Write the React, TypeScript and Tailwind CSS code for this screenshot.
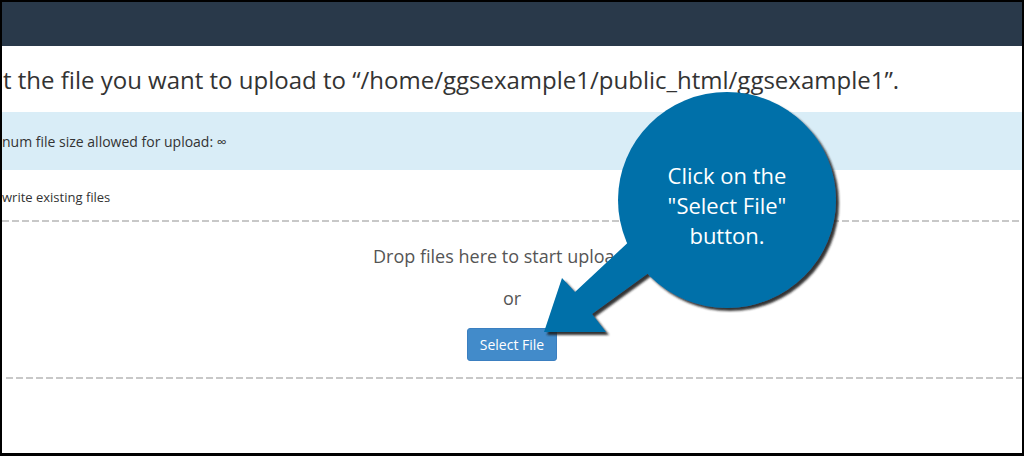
import React from "react";

export default function App() {
  const dash =
    "h-[2px] bg-[repeating-linear-gradient(to_right,#c8c8c8_0px,#c8c8c8_7px,transparent_7px,transparent_10px)]";
  return (
    <div
      className="relative w-[1024px] h-[456px] overflow-hidden bg-black pt-[2px] pl-[2px] pr-[2px] pb-[3px]"
      style={{ fontFamily: '"Open Sans", "Noto Sans", sans-serif' }}
    >
      <div className="flex h-full flex-col bg-white">
        <div className="h-[44px] shrink-0 bg-[#29394a]" />
        <div className="flex h-[66px] shrink-0 items-center pl-[1px] pt-[1px] text-[24px] leading-none text-[#333] whitespace-nowrap">
          t the file you want to upload to “/home/ggsexample1/public_html/ggsexample1”.
        </div>
        <div className="flex h-[58px] shrink-0 items-center bg-[#d9edf7] text-[14px] text-[#333] whitespace-nowrap">
          num file size allowed for upload: ∞
        </div>
        <div className="flex h-[50px] shrink-0 items-center pt-[5px] text-[13px] text-[#333] whitespace-nowrap">
          write existing files
        </div>
        <div className={dash} />
        <div className="flex h-[155px] shrink-0 flex-col items-center">
          <div className="mt-[21px] text-[18px] leading-[26px] text-[#555]">
            Drop files here to start uploading
          </div>
          <div className="mt-[16px] text-[18px] leading-[26px] text-[#555]">or</div>
          <button className="mt-[17px] h-[33px] w-[90px] rounded-[3px] border border-[#3b7fc0] bg-[#428bca] text-[14px] text-white">
            Select File
          </button>
        </div>
        <div className={`ml-[4px] ${dash}`} />
      </div>

      <svg
        className="absolute left-0 top-0"
        width="1024"
        height="456"
        viewBox="0 0 1024 456"
      >
        <defs>
          <filter id="sh" x="-20%" y="-20%" width="140%" height="140%">
            <feDropShadow dx="3" dy="3" stdDeviation="1.2" floodColor="#1a1a1a" floodOpacity="0.9" />
          </filter>
        </defs>
        <g filter="url(#sh)" fill="#0070a9">
          <polygon points="544,332 562,278 575,292 650,222 672,256 592,314 606,332" />
          <ellipse cx="727" cy="200" rx="109" ry="108" />
        </g>
      </svg>

      <div className="absolute left-[618px] top-[160px] flex w-[218px] flex-col items-center text-[22px] leading-[30px] text-white">
        <span>Click on the</span>
        <span>"Select File"</span>
        <span>button.</span>
      </div>
    </div>
  );
}
